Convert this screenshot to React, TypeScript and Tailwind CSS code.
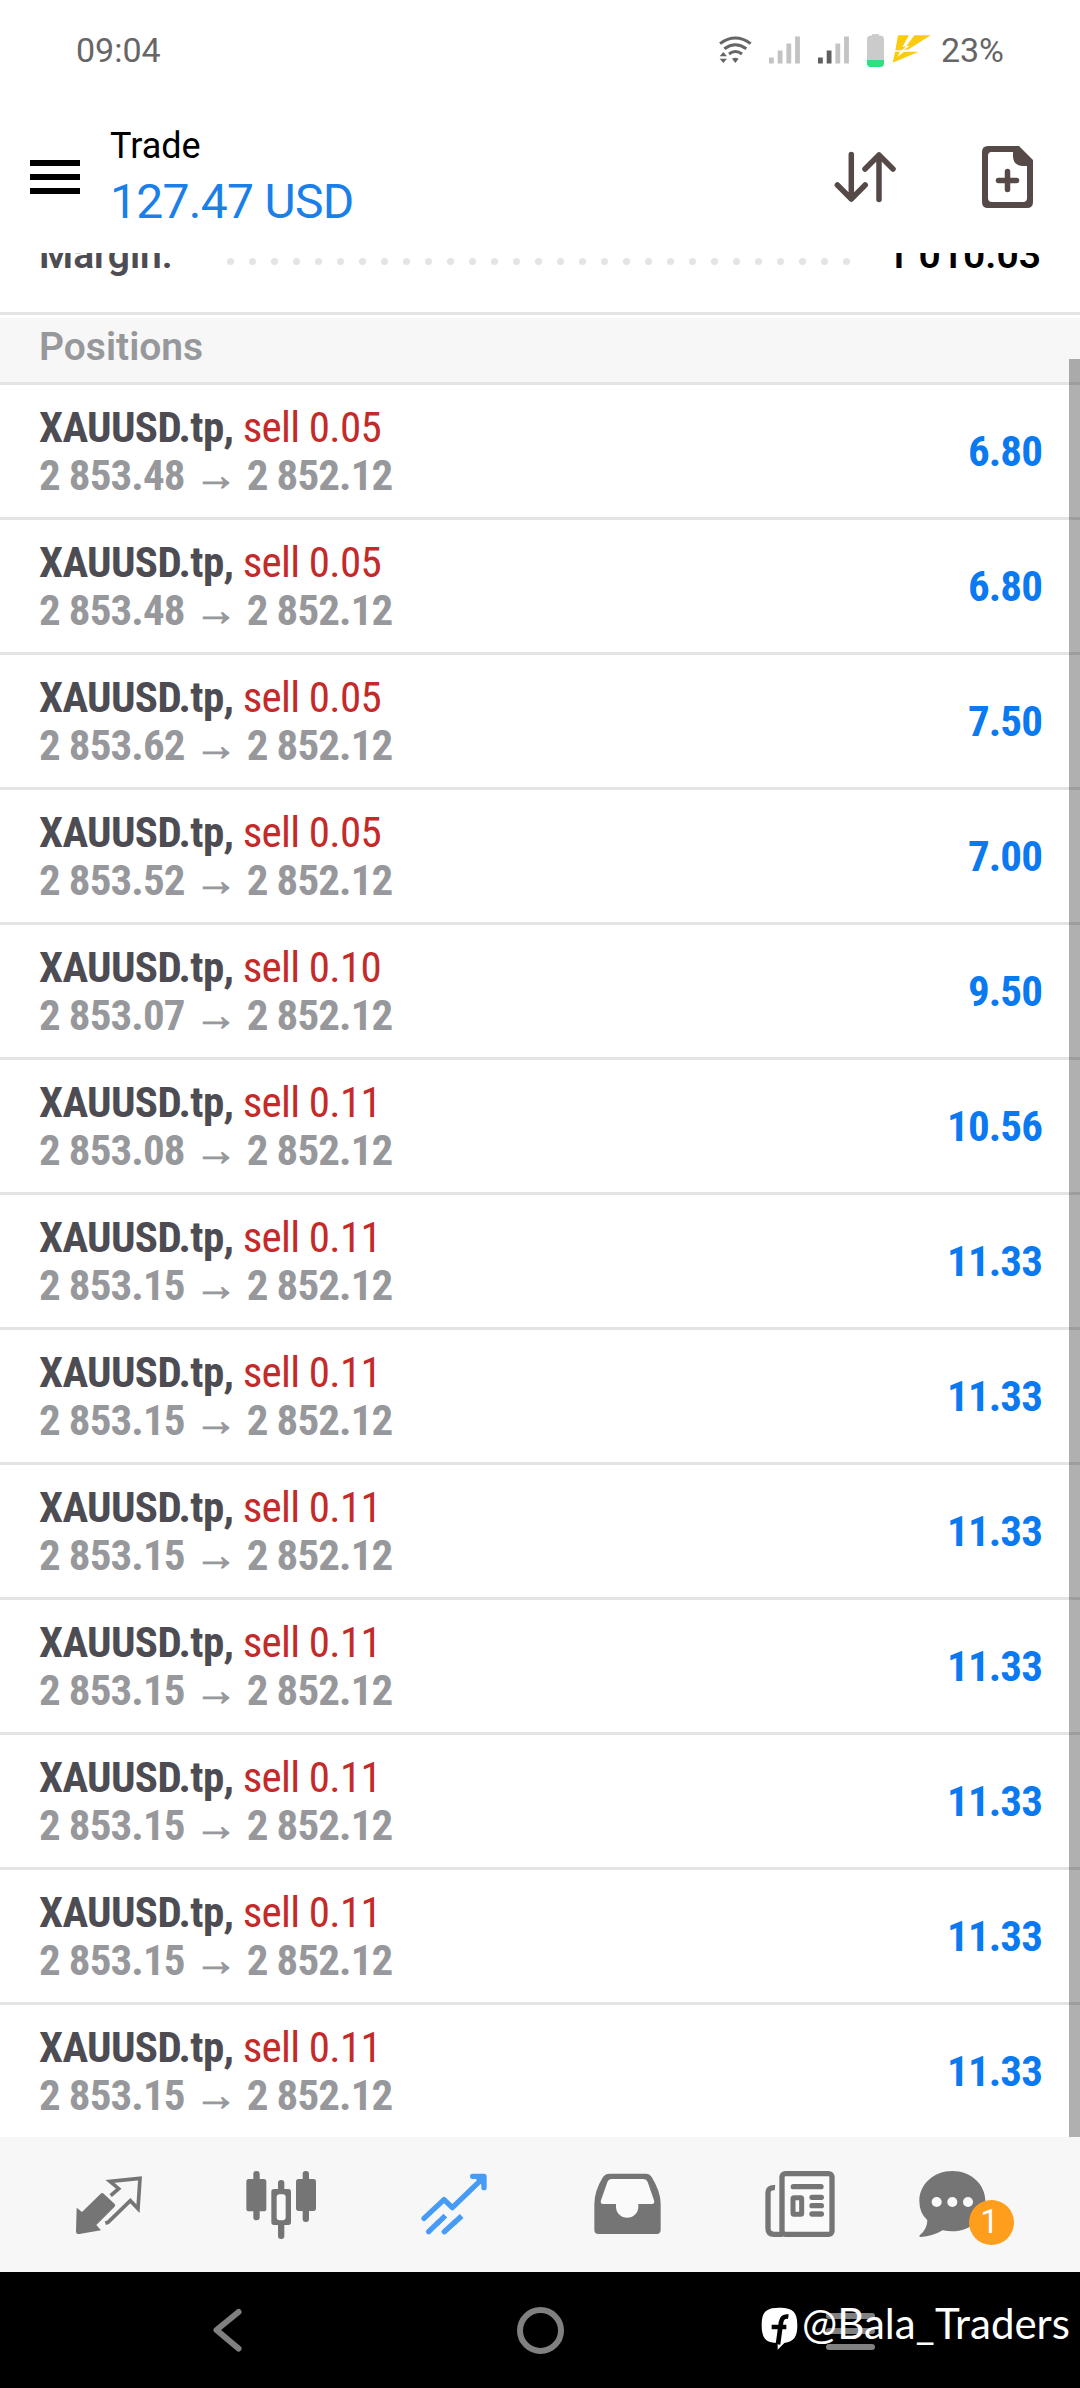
interface Position {
    symbol: string; side: string; volume: string;
    open: string; current: string; profit: string;
}

function sell(volume: string, open: string, profit: string): Position {
    return { symbol: "XAUUSD.tp", side: "sell", volume, open, current: "2 852.12", profit };
}

const POSITIONS: Position[] = [
    sell("0.05", "2 853.48", "6.80"),
    sell("0.05", "2 853.48", "6.80"),
    sell("0.05", "2 853.62", "7.50"),
    sell("0.05", "2 853.52", "7.00"),
    sell("0.10", "2 853.07", "9.50"),
    sell("0.11", "2 853.08", "10.56"),
    sell("0.11", "2 853.15", "11.33"),
    sell("0.11", "2 853.15", "11.33"),
    sell("0.11", "2 853.15", "11.33"),
    sell("0.11", "2 853.15", "11.33"),
    sell("0.11", "2 853.15", "11.33"),
    sell("0.11", "2 853.15", "11.33"),
    sell("0.11", "2 853.15", "11.33"),
];

const SIGNAL_HEIGHTS = [6, 13, 20, 27];

function WifiIcon() {
    return (
        <svg width="33" height="28" viewBox="0 0 99 84" fill="#666">
            <g fill="none" stroke="#666" strokeWidth="9">
                <path d="M3 23 Q49 -11 95 23" />
                <path d="M16 38 Q49 14 82 38" />
                <path d="M30 54 Q49 39 69 54" />
            </g>
            <path d="M39 68 Q49 62 59 68 L49 81Z" />
            <path d="M2 61 H24 L13 48Z M2 68 H24 L13 81Z" />
        </svg>
    );
}

function Signal({ level }: { level: number }) {
    return (
        <svg width="31" height="28" viewBox="0 0 31 28">
            {SIGNAL_HEIGHTS.map((h, i) => (
                <rect key={i} x={i * 8.7} y={27.5 - h} width="4.8" height={h} fill={i < level ? "#5f5f5f" : "#c3c3c3"} />
            ))}
        </svg>
    );
}

function Battery() {
    return (
        <svg width="17" height="33" viewBox="0 0 17 33">
            <rect x="5" y="0" width="7" height="4" rx="1" fill="#cbcbcb" />
            <rect x="0" y="1.6" width="17" height="31.4" rx="4" fill="#cbcbcb" />
            <path d="M0 26 H17 V29 Q17 33 13 33 H4 Q0 33 0 29Z" fill="#2ee07f" />
        </svg>
    );
}

function Bolt() {
    return (
        <svg width="39" height="28" viewBox="0 0 117 84" fill="#fbcb10">
            <path d="M18 1 H51 L31 36 L43 34 L29 46 H10Z" />
            <path d="M67 1 H116 L50 43 L34 45 L54 32 L43 33Z" />
            <path d="M9 50 H24 L16 66 L36 50 H80 L2 83Z" />
        </svg>
    );
}

function StatusBar() {
    return (
        <div className="flex h-[100px] items-center px-[76px] text-[34px] font-[450] text-[#666]">
            <span>09:04</span>
            <div className="ml-auto flex items-center">
                <WifiIcon />
                <div className="ml-[17px] flex gap-[18px]">
                    <Signal level={0} />
                    <Signal level={2} />
                </div>
                <div className="ml-[18px] mr-2"><Battery /></div>
                <div className="mb-[3px] mr-[10px]"><Bolt /></div>
                <span>23%</span>
            </div>
        </div>
    );
}

function Header() {
    return (
        <div className="flex h-[153px] items-center pl-[30px] pr-[47px]">
            <div className="flex w-[50px] flex-col gap-2">
                <div className="h-[6px] bg-black" />
                <div className="h-[6px] bg-black" />
                <div className="h-[6px] bg-black" />
            </div>
            <div className="ml-[30px] flex-1 pt-[2px]">
                <p className="text-[36px] leading-[48px] text-black">Trade</p>
                <p className="text-[48px] leading-[64px] tracking-[-0.7px] text-[#1a7fe8]">127.47 USD</p>
            </div>
            <svg width="62" height="52" viewBox="0 0 62 52" fill="none" stroke="#554a47" strokeWidth="5.5" strokeLinecap="round" strokeLinejoin="round">
                <path d="M17.3 3.5 V48 M3.4 34 L17.3 48 L31.2 34" />
                <path d="M45 48.5 V4 M31 18 L45 4 L59 18" />
            </svg>
            <svg className="ml-[86px]" width="51" height="62" viewBox="0 0 51 62" fill="#554a47">
                <path fillRule="evenodd" d="M6 0 H37 L51 14 V56 Q51 62 45 62 H6 Q0 62 0 56 V6 Q0 0 6 0Z M9.5 6 Q6 6 6 10 V52 Q6 56 10 56 H41 Q45 56 45 52 V20 H40 Q31 19 31 10 V6Z" />
                <path d="M25.5 25.5 V43.5 M16.5 34.5 H34.5" stroke="#554a47" strokeWidth="5.5" strokeLinecap="round" />
            </svg>
        </div>
    );
}

// Last line of the account summary, scrolled half way under the header
function MarginRow() {
    return (
        <div className="h-[59px] overflow-hidden">
            <div className="-mt-[22px] flex h-[48px] items-center px-[39px] text-[39px] font-semibold">
                <span className="w-[188px] text-[#4d4c52]">Margin:</span>
                <div className="mt-[13px] flex gap-[15px]">
                    {Array.from({ length: 29 }, (_, i) => (
                        <div key={i} className="size-[7px] rounded-full bg-[#e4e4e4]" />
                    ))}
                </div>
                <span className="ml-auto whitespace-nowrap text-black">1 010.03</span>
            </div>
        </div>
    );
}

function PositionRow({ position: p }: { position: Position }) {
    return (
        <div className="flex h-[135px] items-center justify-between border-b-[3px] border-[#e4e4e4] pl-[39px] pr-[38px] text-[43px] font-stretch-condensed">
            <div className="leading-[48px]">
                <p className="tracking-[-0.65px]">
                    <span className="font-bold text-[#4d4c52]">{p.symbol},</span>{" "}
                    <span className="text-[#c42a29]">{p.side} {p.volume}</span>
                </p>
                <p className="font-bold tracking-[-0.9px] text-[#97989b]">
                    {p.open} <span className="mx-px [-webkit-text-stroke:1px_#97989b]">→</span> {p.current}
                </p>
            </div>
            <span className="font-bold tracking-[-0.9px] text-[#0b79f0]">{p.profit}</span>
        </div>
    );
}

function QuotesIcon() {
    return (
        <svg width="72" height="72" viewBox="0 0 216 216" fill="#757575">
            <path d="M14 116 L30 129 L86 74 Q91 70 96 75 L128 105 Q132 110 127 114 L73 168 L87 184 L22 195 Q12 197 12 188Z" />
            <path d="M116 80 L140 59 L114 37 L204 28 L198 119 L175 95 L108 160 L100 163" fill="none" stroke="#757575" strokeWidth="11" />
        </svg>
    );
}

function ChartIcon() {
    return (
        <svg width="72" height="72" viewBox="0 0 216 216" fill="#757575">
            <rect x="25" y="6" width="19" height="148" rx="9" />
            <rect x="4" y="30" width="60" height="97" rx="8" />
            <rect x="99" y="33" width="19" height="177" rx="9" />
            <rect x="79" y="60" width="59" height="108" rx="8" />
            <rect x="95" y="76" width="27" height="78" rx="9" fill="#fafafa" />
            <rect x="173" y="6" width="19" height="153" rx="9" />
            <rect x="153" y="30" width="60" height="96" rx="8" />
        </svg>
    );
}

function TradeIcon() {
    return (
        <svg width="72" height="72" viewBox="0 0 216 216" fill="none" stroke="#469bf5" strokeWidth="16" strokeLinecap="round">
            <path d="M18 148 L78 92 L103 116 L194 28" strokeLinejoin="round" />
            <path d="M164 22 H198 V56" strokeLinejoin="round" />
            <path d="M174 26 H196 V48Z" fill="#469bf5" strokeWidth="6" />
            <path d="M32 188 L60 161 M79 188 L110 160" />
            <path d="M58 163 L82 140 M108 162 L131 141" strokeLinecap="butt" />
        </svg>
    );
}

function HistoryIcon() {
    return (
        <svg width="72" height="72" viewBox="0 0 216 216">
            <path d="M56 14 H164 Q176 14 182 24 Q209 68 209 105 V182 Q209 195 196 195 H23 Q10 195 10 182 V105 Q10 66 36 24 Q43 14 56 14Z" fill="#757575" />
            <path d="M62 30 H156 Q166 30 170 39 L189 94 Q192 105 183 105 H142 V113 A33 33 0 0 1 75 113 V105 H36 Q27 105 30 94 L49 40 Q53 30 62 30Z" fill="#fafafa" />
        </svg>
    );
}

function NewsIcon() {
    return (
        <svg width="72" height="72" viewBox="0 0 216 216" fill="none" stroke="#757575" strokeWidth="16">
            <path d="M33 56 Q12 54 12 74 V178 Q12 196 30 196 H56" />
            <rect x="54" y="14" width="150" height="182" rx="10" fill="#fafafa" />
            <path d="M88 53 H171" strokeLinecap="round" />
            <rect x="87" y="86" width="26" height="50" rx="3" strokeWidth="15" />
            <path d="M144 85 H172 M144 110 H172 M144 135 H172" strokeLinecap="round" />
        </svg>
    );
}

function MessagesIcon() {
    return (
        <svg width="72" height="72" viewBox="0 0 216 216">
            <path d="M109 6 C164 6 208 45 208 96 C208 147 164 187 109 187 Q94 187 80 184 Q50 202 14 204 Q7 203 12 198 Q34 180 34 154 Q10 131 10 96 C10 45 54 6 109 6Z" fill="#757575" />
            <g fill="#fafafa">
                <circle cx="62" cy="99" r="15" />
                <circle cx="109" cy="99" r="15" />
                <circle cx="156" cy="99" r="15" />
            </g>
        </svg>
    );
}

function TabBar() {
    return (
        <div className="flex h-[135px] items-center gap-[101px] bg-[#f7f7f7] pl-[72px]">
            <QuotesIcon />
            <ChartIcon />
            <TradeIcon />
            <HistoryIcon />
            <NewsIcon />
            <div className="relative -ml-[21px]">
                <MessagesIcon />
                <span className="absolute left-[53px] top-[31px] flex size-[45px] items-center justify-center rounded-full bg-[#ff9d1c] pr-1 text-[33px] text-white">
                    1
                </span>
            </div>
        </div>
    );
}

function NavBar() {
    return (
        <div className="relative flex h-[116px] items-center bg-black pl-[212px]">
            <svg width="31" height="44" viewBox="0 0 31 44" fill="none" stroke="#808080" strokeWidth="6" strokeLinecap="round" strokeLinejoin="round">
                <path d="M26.5 4 L4.5 22 L26.5 40.5" />
            </svg>
            <div className="ml-[274px] size-[47px] rounded-full border-[6px] border-[#808080]" />
            <div className="ml-[262px] flex w-[49px] flex-col gap-[9.5px] pt-[2px]">
                <div className="h-[6px] rounded-full bg-[#808080]" />
                <div className="h-[6px] rounded-full bg-[#808080]" />
                <div className="h-[6px] rounded-full bg-[#808080]" />
            </div>
            <div className="absolute left-[761px] top-[35px] flex">
                <svg width="37" height="43" viewBox="0 0 111 129">
                    <path d="M55 2 C96 2 109 15 109 55 C109 90 99 104 70 108 L50 128 V108 C14 107 2 93 2 55 C2 15 14 2 55 2Z" fill="#fff" />
                    <path d="M82 29 Q63 26 60 46 L51 112 M32 60 H76" fill="none" stroke="#000" strokeWidth="14" />
                </svg>
                <span className="ml-[4px] -mt-[12px] font-['Lato'] text-[42px] leading-[56px] text-white">@Bala_Traders</span>
            </div>
        </div>
    );
}

export default function App() {
    return (
        <div className="flex h-[2388px] w-[1080px] flex-col overflow-hidden bg-white font-['Roboto',sans-serif]">
            <StatusBar />
            <Header />
            <div className="relative h-[1884px] overflow-hidden">
                <MarginRow />
                <div className="border-t-[3px] border-[#e4e4e4] pt-[3px]">
                    <div className="flex h-[67px] items-center border-b-[3px] border-[#e4e4e4] bg-[#f7f7f7] pb-[6px] pl-[39px] text-[39px] font-semibold text-[#97989b]">
                        Positions
                    </div>
                </div>
                {POSITIONS.map((p, i) => <PositionRow key={i} position={p} />)}
                <div className="absolute bottom-0 right-0 top-[106px] w-[11px] bg-black/31" />
            </div>
            <TabBar />
            <NavBar />
        </div>
    );
}
